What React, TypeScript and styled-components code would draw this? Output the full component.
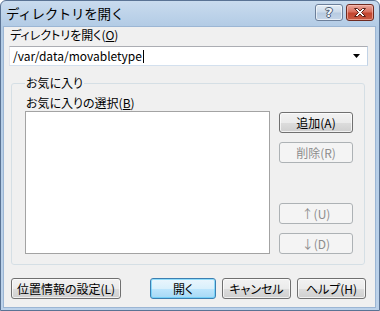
import styled, { createGlobalStyle } from "styled-components";

const GlobalStyle = createGlobalStyle`
  html, body {
    margin: 0;
    padding: 0;
    background: #ffffff;
  }
  body {
    font-family: "Noto Sans CJK JP", "Liberation Sans", sans-serif;
    font-size: 12px;
    font-feature-settings: "palt";
    color: #000;
  }
`;

const Window = styled.div`
  box-sizing: border-box;
  width: 380px;
  height: 311px;
  display: flex;
  flex-direction: column;
  border: 1px solid #5a7394;
  border-radius: 6px 6px 0 0;
  background: linear-gradient(to bottom, #c9dbee 0px, #b2cbe5 26px, #bcd2ea 100%);
  overflow: hidden;
`;

const TitleBar = styled.div`
  height: 26px;
  display: flex;
  align-items: flex-start;
  padding: 3px 5px 0 5px;
  box-sizing: border-box;
`;

const TitleText = styled.div`
  flex: 1;
  font-size: 13.5px;
  line-height: 18px;
  letter-spacing: -0.3px;
  font-feature-settings: normal;
  color: #000;
`;

const CaptionButtons = styled.div`
  display: flex;
  gap: 3px;
`;

const CaptionButton = styled.div<{ $close?: boolean }>`
  box-sizing: border-box;
  width: 28px;
  height: 17px;
  border-radius: 3px;
  display: flex;
  align-items: center;
  justify-content: center;
  border: 1px solid ${(p) => (p.$close ? "#6e2a20" : "#6c7f9a")};
  box-shadow: inset 0 0 0 1px
    ${(p) => (p.$close ? "rgba(255,200,190,0.6)" : "rgba(255,255,255,0.6)")};
  background: ${(p) =>
    p.$close
      ? "linear-gradient(to bottom, #e9a89d 0%, #d8705f 45%, #c3452f 55%, #c75a43 100%)"
      : "linear-gradient(to bottom, #e4ecf5 0%, #cddbeb 45%, #b8cbe1 55%, #c6d6e9 100%)"};
`;

const HelpGlyph = styled.span`
  font-family: "DejaVu Sans", sans-serif;
  font-weight: bold;
  font-size: 13px;
  line-height: 13px;
  color: #f4f7fb;
  text-shadow: 1px 0 0 #4a5a70, -1px 0 0 #4a5a70, 0 1px 0 #4a5a70,
    0 -1px 0 #4a5a70;
`;

const Client = styled.div`
  flex: 1;
  margin: 0 4px 3px 3px;
  background: #f0f0f0;
  display: flex;
  flex-direction: column;
  padding: 1px 7px 8px 5px;
  box-shadow: 0 0 0 1px #9cb6d4;
`;

const Label = styled.div`
  line-height: 14px;
  margin-left: 1px;
  white-space: nowrap;
`;

const Combo = styled.div`
  box-sizing: border-box;
  margin-top: 4px;
  height: 20px;
  background: #fff;
  border: 1px solid;
  border-color: #abadb3 #c2d3e6 #d3e0ee #e2e3ea;
  display: flex;
  align-items: center;
  padding: 0 7px 0 3px;
`;

const ComboText = styled.div`
  flex: 1;
  display: flex;
  align-items: center;
  line-height: 14px;
`;

const Caret = styled.span`
  display: inline-block;
  width: 1px;
  height: 13px;
  background: #000;
  margin-left: 1px;
`;

const Group = styled.fieldset`
  margin: 10px 3px 0 2px;
  padding: 6px 11px 10px 13px;
  border: 1px solid #d5dfe5;
  border-radius: 3px;
  min-width: 0;
`;

const GroupLegend = styled.legend`
  padding: 0 1px;
  margin-left: 0;
  line-height: 14px;
`;

const GroupRow = styled.div`
  display: flex;
  gap: 9px;
  margin-top: 1px;
`;

const ListBox = styled.div`
  flex: 1;
  height: 143px;
  box-sizing: border-box;
  background: #fff;
  border: 1px solid #a3a3a3;
`;

const SideButtons = styled.div`
  width: 74px;
  display: flex;
  flex-direction: column;
  gap: 9px;
  padding-top: 1px;
`;

const Spacer = styled.div`
  flex: 1;
`;

const Button = styled.button<{ $width: number; $default?: boolean }>`
  box-sizing: border-box;
  width: ${(p) => p.$width}px;
  height: 21px;
  padding: 0;
  font-family: inherit;
  font-size: 12px;
  font-feature-settings: "palt";
  line-height: 14px;
  color: #000;
  border-radius: 3px;
  border: 1px solid ${(p) => (p.$default ? "#3c7fb1" : "#707070")};
  box-shadow: inset 0 0 0 1px
    ${(p) => (p.$default ? "rgba(72, 200, 250, 0.55)" : "rgba(255,255,255,0.7)")};
  background: ${(p) =>
    p.$default
      ? "linear-gradient(to bottom, #eaf6fd 0%, #d9f0fc 50%, #bee6fd 50%, #a7d9f5 100%)"
      : "linear-gradient(to bottom, #f2f2f2 0%, #ebebeb 50%, #dddddd 50%, #cfcfcf 100%)"};
  cursor: default;

  &:disabled {
    border-color: #adb2b5;
    background: #f4f4f4;
    box-shadow: none;
    color: #8d8d8d;
  }
`;

const Footer = styled.div`
  display: flex;
  justify-content: space-between;
  margin: 13px 2px 0 2px;
`;

const FooterRight = styled.div`
  display: flex;
  gap: 6px;
`;

export default function App() {
  return (
    <>
      <GlobalStyle />
      <Window>
        <TitleBar>
          <TitleText>ディレクトリを開く</TitleText>
          <CaptionButtons>
            <CaptionButton>
              <HelpGlyph>?</HelpGlyph>
            </CaptionButton>
            <CaptionButton $close>
              <svg width="14" height="11" viewBox="0 0 14 11">
                <path
                  d="M1.5 1.5 L4.5 1.5 L7 4 L9.5 1.5 L12.5 1.5 L8.5 5.5 L12.5 9.5 L9.5 9.5 L7 7 L4.5 9.5 L1.5 9.5 L5.5 5.5 Z"
                  fill="#ffffff"
                  stroke="#5a2018"
                  strokeWidth="1"
                  strokeLinejoin="round"
                />
              </svg>
            </CaptionButton>
          </CaptionButtons>
        </TitleBar>
        <Client>
          <Label>
            ディレクトリを開く(<u>O</u>)
          </Label>
          <Combo>
            <ComboText>
              /var/data/movabletype
              <Caret />
            </ComboText>
            <svg width="7" height="4" viewBox="0 0 7 4">
              <path d="M0 0 H7 L3.5 4 Z" fill="#000" />
            </svg>
          </Combo>
          <Group>
            <GroupLegend>お気に入り</GroupLegend>
            <Label>
              お気に入りの選択(<u>B</u>)
            </Label>
            <GroupRow>
              <ListBox />
              <SideButtons>
                <Button $width={74}>追加(A)</Button>
                <Button $width={74} disabled>
                  削除(R)
                </Button>
                <Spacer />
                <Button $width={74} disabled>
                  ↑(U)
                </Button>
                <Button $width={74} disabled>
                  ↓(D)
                </Button>
              </SideButtons>
            </GroupRow>
          </Group>
          <Footer>
            <Button $width={110}>位置情報の設定(L)</Button>
            <FooterRight>
              <Button $width={66} $default>
                開く
              </Button>
              <Button $width={69}>キャンセル</Button>
              <Button $width={69}>ヘルプ(H)</Button>
            </FooterRight>
          </Footer>
        </Client>
      </Window>
    </>
  );
}
